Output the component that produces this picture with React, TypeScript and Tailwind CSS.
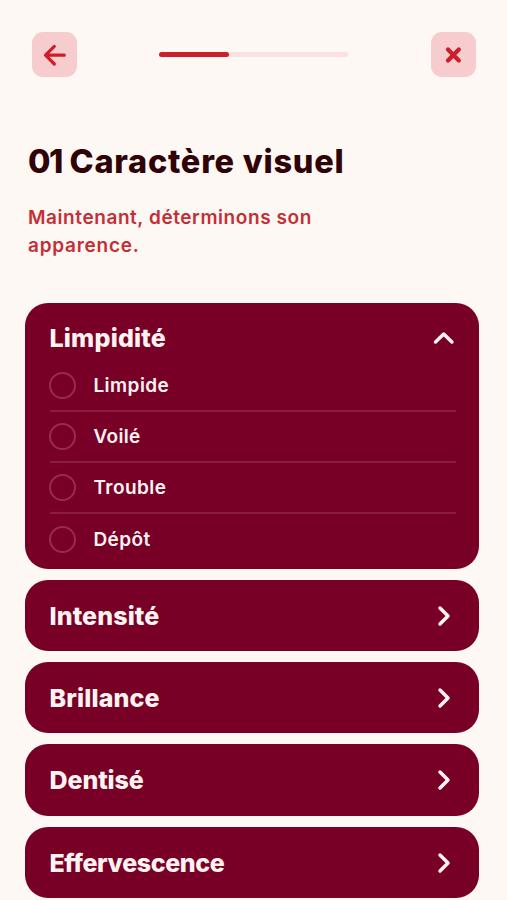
import React, { useState } from 'react';

const sections = [
  {
    title: 'Limpidité',
    tracking: 'tracking-[0.2px]',
    options: [
      { label: 'Limpide', tracking: 'tracking-[0.45px]' },
      { label: 'Voilé', tracking: 'tracking-[0.35px]' },
      { label: 'Trouble', tracking: 'tracking-[0.45px]' },
      { label: 'Dépôt', tracking: 'tracking-[0.45px]' },
    ],
  },
  { title: 'Intensité', tracking: 'tracking-[0.1px]', options: [] },
  { title: 'Brillance', tracking: 'tracking-[0.15px]', options: [] },
  { title: 'Dentisé', tracking: 'tracking-[-0.1px]', options: [] },
  { title: 'Effervescence', tracking: 'tracking-[-0.4px]', options: [] },
];

const Chevron = ({ open }: { open: boolean }) => (
  <svg
    className="h-6 w-6 shrink-0"
    viewBox="0 0 24 24"
    fill="none"
    stroke="currentColor"
    strokeWidth="3.5"
    strokeLinecap="round"
    strokeLinejoin="round"
  >
    <path d={open ? 'M3.5 16l8.2-8 8.2 8' : 'M8 4l8 8-8 8'} />
  </svg>
);

const App = () => {
  const [openSection, setOpenSection] = useState('Limpidité');
  const [selected, setSelected] = useState('');

  return (
    <div className="h-[900px] w-[507px] overflow-hidden bg-[#fef8f4] font-[Inter,sans-serif]">
      <header className="flex items-center justify-between pt-8 pr-[31px] pl-8">
        <button className="flex h-[45px] w-[45px] items-center justify-center rounded-[11px] bg-[#f7cccf] text-[#cb1f2a]">
          <svg className="h-6 w-6" viewBox="0 0 24 24" fill="none" stroke="currentColor" strokeWidth="3.2" strokeLinecap="round" strokeLinejoin="round">
            <path d="M21.3 12.2H2.5M11.3 3.4l-8.8 8.8 8.8 8.8" />
          </svg>
        </button>
        <div className="mr-px h-[5.5px] w-[189px] rounded-full bg-[#fbe0e2]">
          <div className="h-full w-[70px] rounded-full bg-[#cb1f2a]" />
        </div>
        <button className="flex h-[45px] w-[45px] items-center justify-center rounded-[11px] bg-[#f7cccf] text-[#cb1f2a]">
          <svg className="h-6 w-6" viewBox="0 0 24 24" fill="none" stroke="currentColor" strokeWidth="4.3" strokeLinecap="round">
            <path d="M6 6.6l10.8 10.8M16.8 6.6l-10.8 10.8" />
          </svg>
        </button>
      </header>

      <div className="pt-[65px] pl-7">
        <h1 className="text-[32.5px] leading-[40px] font-extrabold tracking-[0.75px] whitespace-nowrap text-[#300407]">
          <span className="tracking-[-1.6px]">01</span> Caractère visuel
        </h1>
        <p className="mt-[22px] text-[19px] leading-[28px] font-semibold tracking-[0.57px] whitespace-nowrap text-[#c62e36]">
          Maintenant, déterminons son
          <br />
          <span className="tracking-[0.75px]">apparence.</span>
        </p>
      </div>

      <div className="mt-[43px] flex flex-col gap-[11px] pr-7 pl-[25px]">
        {sections.map((section) => {
          const open = section.title === openSection;
          return (
            <section key={section.title} className="rounded-[23px] bg-[#780026] pr-[23px] pl-[25px] text-[#fff3f1]">
              <button
                className={`flex w-full items-center justify-between ${open ? 'h-[70px]' : 'h-[71.3px] pt-px'}`}
                onClick={() => setOpenSection(open ? '' : section.title)}
              >
                <span className={`-ml-[0.5px] text-[25px] leading-8 font-extrabold ${section.tracking}`}>{section.title}</span>
                <Chevron open={open} />
              </button>
              {open && section.options.length > 0 && (
                <ul className="-mt-[12.5px] pb-[3px]">
                  {section.options.map((option) => (
                    <li key={option.label} className="border-b-2 border-[#8b1d40] last:border-transparent">
                      <button
                        className="flex h-[49.3px] w-full items-center gap-[17px]"
                        onClick={() => setSelected(option.label)}
                      >
                        <span
                          className={`-ml-[0.6px] h-[27px] w-[27px] rounded-full border-2 border-[#982c4f] ${selected === option.label ? 'bg-[#982c4f]' : ''}`}
                        />
                        <span className={`pt-[1.5px] text-[19px] leading-7 font-semibold ${option.tracking}`}>{option.label}</span>
                      </button>
                    </li>
                  ))}
                </ul>
              )}
            </section>
          );
        })}
      </div>
    </div>
  );
};

export default App;
